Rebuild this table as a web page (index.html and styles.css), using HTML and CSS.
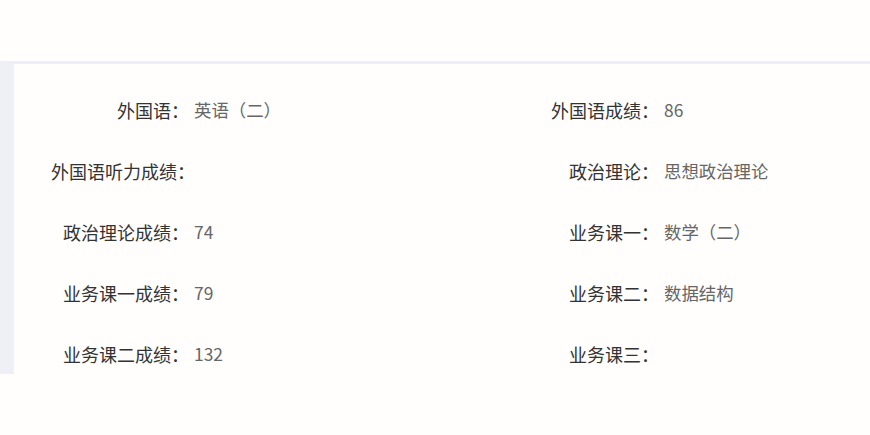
FILE: index.html
```html
<!DOCTYPE html>
<html lang="zh">
<head>
<meta charset="utf-8">
<link rel="stylesheet" href="styles.css">
</head>
<body>
<div class="top"></div>
<div class="panel">
  <div class="grid">
    <div class="item"><span class="label">外国语：</span><span class="value">英语（二）</span></div>
    <div class="item"><span class="label">外国语成绩：</span><span class="value">86</span></div>
    <div class="item"><span class="label">外国语听力成绩：</span><span class="value"></span></div>
    <div class="item"><span class="label">政治理论：</span><span class="value">思想政治理论</span></div>
    <div class="item"><span class="label">政治理论成绩：</span><span class="value">74</span></div>
    <div class="item"><span class="label">业务课一：</span><span class="value">数学（二）</span></div>
    <div class="item"><span class="label">业务课一成绩：</span><span class="value">79</span></div>
    <div class="item"><span class="label">业务课二：</span><span class="value">数据结构</span></div>
    <div class="item"><span class="label">业务课二成绩：</span><span class="value">132</span></div>
    <div class="item"><span class="label">业务课三：</span><span class="value"></span></div>
  </div>
</div>
</body>
</html>
```
FILE: styles.css
```css
html, body {
  margin: 0;
  padding: 0;
  background: #fffefc;
  font-family: "Noto Sans CJK SC", "Noto Sans", sans-serif;
}
.top {
  height: 61px;
}
.panel {
  border-top: 3px solid #eeeef8;
  border-left: 14px solid #efeff6;
  height: 313px;
  overflow: hidden;
  box-sizing: border-box;
}
.grid {
  display: grid;
  grid-template-columns: 470px 1fr;
  row-gap: 37px;
  padding: 34px 0 0 37px;
}
.item {
  display: flex;
  align-items: center;
  height: 24px;
  font-size: 18px;
  line-height: 24px;
}
.label {
  flex: none;
  display: block;
  width: 138px;
  text-align: right;
  color: #333333;
  white-space: nowrap;
}
.value {
  margin-left: 5px;
  font-size: 17.4px;
  color: #666666;
  white-space: nowrap;
}
```
